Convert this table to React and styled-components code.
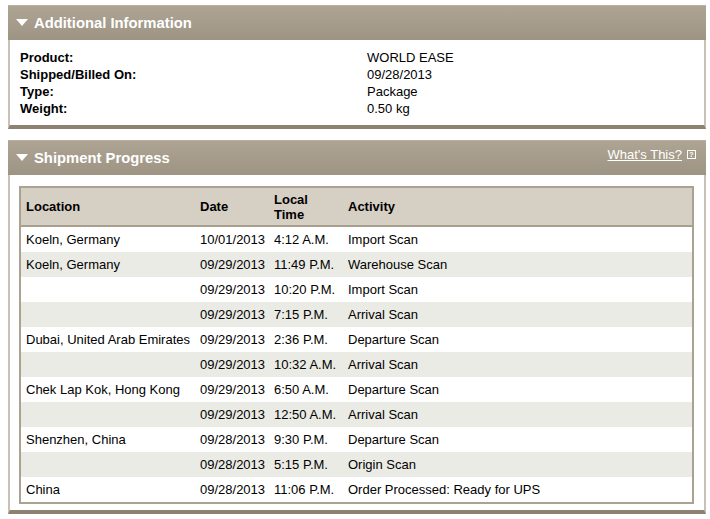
import React from 'react'
import styled, { createGlobalStyle } from 'styled-components'

const GlobalStyle = createGlobalStyle`
    body {
        margin: 0;
        background: #fff;
        font-family: 'Liberation Sans', Arial, Helvetica, sans-serif;
        color: #000;
    }
`

const info = [
    ['Product:', 'WORLD EASE'],
    ['Shipped/Billed On:', '09/28/2013'],
    ['Type:', 'Package'],
    ['Weight:', '0.50 kg'],
]

const progress = [
    ['Koeln, Germany', '10/01/2013', '4:12 A.M.', 'Import Scan'],
    ['Koeln, Germany', '09/29/2013', '11:49 P.M.', 'Warehouse Scan'],
    ['', '09/29/2013', '10:20 P.M.', 'Import Scan'],
    ['', '09/29/2013', '7:15 P.M.', 'Arrival Scan'],
    ['Dubai, United Arab Emirates', '09/29/2013', '2:36 P.M.', 'Departure Scan'],
    ['', '09/29/2013', '10:32 A.M.', 'Arrival Scan'],
    ['Chek Lap Kok, Hong Kong', '09/29/2013', '6:50 A.M.', 'Departure Scan'],
    ['', '09/29/2013', '12:50 A.M.', 'Arrival Scan'],
    ['Shenzhen, China', '09/28/2013', '9:30 P.M.', 'Departure Scan'],
    ['', '09/28/2013', '5:15 P.M.', 'Origin Scan'],
    ['China', '09/28/2013', '11:06 P.M.', 'Order Processed: Ready for UPS'],
]

function Triangle() {
    return (
        <svg width="12" height="8" viewBox="0 0 12 8">
            <path d="M0 0 L12 0 L6 7 Z" fill="#fff" />
        </svg>
    )
}

export default function App() {
    return (
        <Page>
            <GlobalStyle />
            <Panel>
                <Header>
                    <Title>
                        <Triangle />
                        Additional Information
                    </Title>
                </Header>
                <InfoBody>
                    {info.map(([k, v]) => (
                        <React.Fragment key={k}>
                            <Label>{k}</Label>
                            <span>{v}</span>
                        </React.Fragment>
                    ))}
                </InfoBody>
            </Panel>
            <Panel>
                <Header>
                    <Title>
                        <Triangle />
                        Shipment Progress
                    </Title>
                    <Help>
                        <a href="#">What's This?</a>
                        <HelpBox>?</HelpBox>
                    </Help>
                </Header>
                <TableBody>
                    <Table>
                        <colgroup>
                            <col style={{ width: 175 }} />
                            <col style={{ width: 74 }} />
                            <col style={{ width: 74 }} />
                            <col />
                        </colgroup>
                        <thead>
                            <tr>
                                <th>Location</th>
                                <th>Date</th>
                                <th>
                                    Local
                                    <br />
                                    Time
                                </th>
                                <th>Activity</th>
                            </tr>
                        </thead>
                        <tbody>
                            {progress.map((r, i) => (
                                <Row key={i} $alt={i % 2 === 1}>
                                    {r.map((c, j) => (
                                        <td key={j}>{c}</td>
                                    ))}
                                </Row>
                            ))}
                        </tbody>
                    </Table>
                </TableBody>
            </Panel>
        </Page>
    )
}

const Page = styled.div`
    padding: 5px 4px 0 8px;
    display: flex;
    flex-direction: column;
    gap: 11px;
`

const Panel = styled.section`
    width: 698px;
    box-sizing: border-box;
    border-left: 2px solid #c9c1b5;
    border-right: 2px solid #c9c1b5;
    border-bottom: 4px solid #8d8271;
    background: #fff;
`

const Header = styled.div`
    height: 35px;
    margin: 0 -2px;
    padding: 0 10px 0 8px;
    display: flex;
    align-items: center;
    justify-content: space-between;
    background: linear-gradient(#ada494, #9e9484);
    border-top: 1px solid #b9b0a2;
    box-sizing: border-box;
`

const Title = styled.h2`
    margin: 0;
    display: flex;
    align-items: center;
    gap: 6px;
    font-size: 14.8px;
    font-weight: bold;
    color: #fff;
`

const Help = styled.div`
    display: flex;
    align-items: center;
    gap: 5px;
    margin-top: -7px;
    font-size: 13px;

    a {
        color: #fff;
        text-decoration: underline;
    }
`

const HelpBox = styled.span`
    width: 7px;
    height: 7px;
    border: 1px solid #fff;
    font-size: 7px;
    line-height: 7px;
    text-align: center;
    color: #fff;
    font-weight: bold;
`

const InfoBody = styled.div`
    display: grid;
    grid-template-columns: 347px 1fr;
    padding: 9px 10px 8px 10px;
    font-size: 13px;
    line-height: 17px;
`

const Label = styled.span`
    font-weight: bold;
`

const TableBody = styled.div`
    padding: 11px 10px 6px 9px;
`

const Table = styled.table`
    width: 100%;
    border-collapse: collapse;
    border: 2px solid #aca291;
    font-size: 13px;
    table-layout: fixed;

    th {
        background: #d6cfc3;
        text-align: left;
        font-weight: bold;
        line-height: 15px;
        height: 37px;
        padding: 0 5px;
        border-bottom: 2px solid #a99f8f;
        vertical-align: middle;
    }

    td {
        height: 25px;
        padding: 0 5px;
        white-space: nowrap;
        vertical-align: middle;
    }
`

const Row = styled.tr`
    background: ${({ $alt }) => ($alt ? '#ebebe5' : '#fff')};
`
